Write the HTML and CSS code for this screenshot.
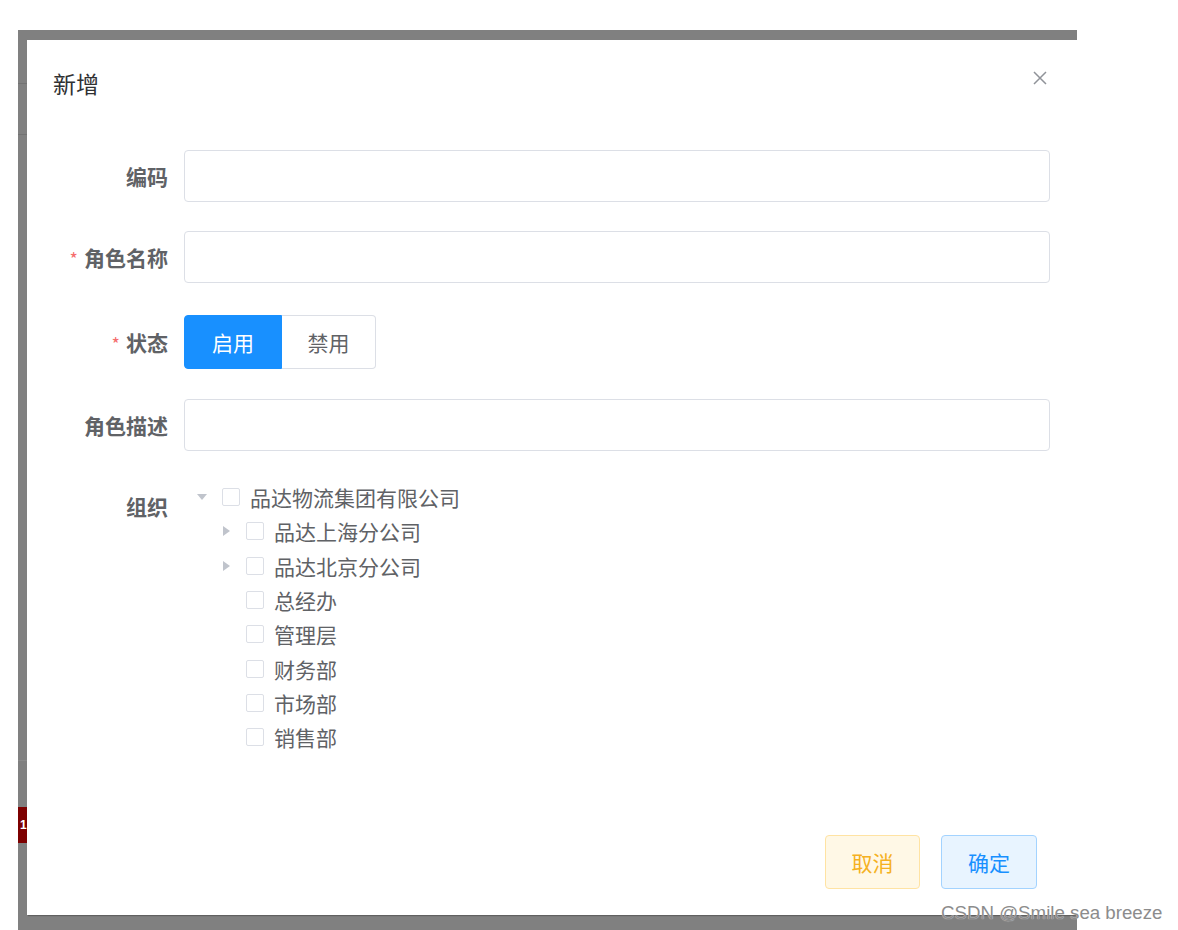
FILE: index.html
```html
<!DOCTYPE html>
<html lang="zh-CN">
<head>
<meta charset="utf-8">
<title>新增</title>
<link rel="stylesheet" href="styles.css">
</head>
<body>
<div class="page">
  <div class="mask">
    <div class="peek">
      <div class="peek-line l1"></div>
      <div class="peek-line l2"></div>
      <div class="peek-line l3"></div>
      <div class="peek-tag"><span>1</span></div>
    </div>
    <div class="dialog">
      <div class="dialog-header">
        <span class="dialog-title">新增</span>
        <svg class="dialog-close" width="14" height="14" viewBox="0 0 14 14"><path d="M1 1 L13 13 M13 1 L1 13" stroke="#909399" stroke-width="1.5" fill="none"/></svg>
      </div>
      <div class="dialog-body">
        <div class="form-item">
          <label class="form-label">编码</label>
          <div class="form-content"><div class="input"></div></div>
        </div>
        <div class="form-item gap-a">
          <label class="form-label"><span class="req">*</span>角色名称</label>
          <div class="form-content"><div class="input"></div></div>
        </div>
        <div class="form-item gap-b">
          <label class="form-label status-label"><span class="req">*</span>状态</label>
          <div class="form-content">
            <div class="radio-group">
              <span class="radio-btn active">启用</span>
              <span class="radio-btn">禁用</span>
            </div>
          </div>
        </div>
        <div class="form-item gap-c">
          <label class="form-label">角色描述</label>
          <div class="form-content"><div class="input"></div></div>
        </div>
        <div class="form-item last">
          <label class="form-label">组织</label>
          <div class="form-content">
            <div class="tree">
              <div class="tree-node lv1"><span class="caret down"></span><span class="checkbox"></span><span class="node-label">品达物流集团有限公司</span></div>
              <div class="tree-node lv2"><span class="caret right"></span><span class="checkbox"></span><span class="node-label">品达上海分公司</span></div>
              <div class="tree-node lv2"><span class="caret right"></span><span class="checkbox"></span><span class="node-label">品达北京分公司</span></div>
              <div class="tree-node lv2"><span class="caret"></span><span class="checkbox"></span><span class="node-label">总经办</span></div>
              <div class="tree-node lv2"><span class="caret"></span><span class="checkbox"></span><span class="node-label">管理层</span></div>
              <div class="tree-node lv2"><span class="caret"></span><span class="checkbox"></span><span class="node-label">财务部</span></div>
              <div class="tree-node lv2"><span class="caret"></span><span class="checkbox"></span><span class="node-label">市场部</span></div>
              <div class="tree-node lv2"><span class="caret"></span><span class="checkbox"></span><span class="node-label">销售部</span></div>
            </div>
          </div>
        </div>
      </div>
      <div class="dialog-footer">
        <span class="btn btn-warning">取消</span>
        <span class="btn btn-primary">确定</span>
      </div>
    </div>
  </div>
</div>
<div class="watermark">CSDN @Smile sea breeze</div>
</body>
</html>
```
FILE: styles.css
```css
html, body {
  margin: 0;
  padding: 0;
  background: #ffffff;
}
body {
  font-family: "Noto Sans CJK SC", "Noto Sans", sans-serif;
  color: #606266;
  width: 1178px;
  height: 930px;
  overflow: hidden;
  position: relative;
}
.page {
  padding: 30px 0 0 18px;
}
.mask {
  width: 1059px;
  height: 900px;
  box-sizing: border-box;
  padding: 10px 0 15px 0;
  background: #808080;
  display: flex;
}
.peek {
  width: 9px;
  flex: none;
  display: flex;
  flex-direction: column;
}
.peek-line {
  height: 1px;
  background: #727272;
}
.peek-line.l1 { margin-top: 43px; }
.peek-line.l2 { margin-top: 50px; }
.peek-line.l3 { margin-top: 625px; background: #8a8a8a; }
.peek-tag {
  margin-top: 46px;
  height: 36px;
  background: #7d0000;
  overflow: hidden;
  color: #ffffff;
  font-family: "Liberation Sans", sans-serif;
  font-weight: bold;
  font-size: 12px;
  line-height: 36px;
  padding-left: 2px;
  box-sizing: border-box;
}
.dialog {
  flex: 1;
  background: #ffffff;
  box-shadow: 0 2px 1px -1px rgba(0,0,0,0.25);
  display: flex;
  flex-direction: column;
}
.dialog-header {
  display: flex;
  justify-content: space-between;
  align-items: flex-start;
  padding: 30px 30px 0 26px;
}
.dialog-title {
  font-size: 23px;
  line-height: 26px;
  color: #303133;
}
.dialog-close {
  margin-top: 1px;
}
.dialog-body {
  padding: 54px 27px 0 0;
}
.form-item {
  display: grid;
  grid-template-columns: 157px 1fr;
  margin-bottom: 29px;
}
.form-item.gap-a { margin-bottom: 31px; }
.form-item.gap-b { margin-bottom: 29px; }
.form-item.last { margin-bottom: 0; }
.form-label {
  text-align: right;
  padding-right: 16px;
  font-size: 21px;
  font-weight: 700;
  line-height: 52px;
  color: #606266;
}
.status-label { line-height: 54px; }
.req {
  color: #f56c6c;
  font-weight: 400;
  font-size: 18px;
  margin-right: 6px;
}
.input {
  height: 52px;
  box-sizing: border-box;
  border: 1px solid #dcdfe6;
  border-radius: 4px;
  background: #fff;
}
.radio-group {
  display: flex;
  height: 54px;
}
.radio-btn {
  box-sizing: border-box;
  height: 54px;
  line-height: 52px;
  text-align: center;
  font-size: 21px;
  color: #606266;
  border: 1px solid #dcdfe6;
  background: #fff;
}
.radio-btn.active {
  width: 98px;
  background: #1890ff;
  border-color: #1890ff;
  color: #ffffff;
  border-radius: 4px 0 0 4px;
}
.radio-btn:last-child {
  width: 94px;
  border-left: 0;
  border-radius: 0 4px 4px 0;
}
.tree {
  display: flex;
  flex-direction: column;
}
.tree-node {
  display: flex;
  align-items: center;
  height: 34.3px;
}
.tree-node.lv2 { padding-left: 24px; }
.caret {
  width: 10px;
  height: 10px;
  margin: 0 15px 0 13px;
  box-sizing: border-box;
  flex: none;
}
.caret.down {
  height: 6px;
  border-left: 5px solid transparent;
  border-right: 5px solid transparent;
  border-top: 6px solid #c0c4cc;
}
.caret.right {
  width: 7px;
  margin: 0 16px 0 15px;
  border-top: 5px solid transparent;
  border-bottom: 5px solid transparent;
  border-left: 7px solid #c0c4cc;
}
.checkbox {
  width: 18px;
  height: 18px;
  box-sizing: border-box;
  border: 1px solid #dcdfe6;
  border-radius: 2px;
  background: #fff;
  flex: none;
}
.node-label {
  margin-left: 10px;
  font-size: 21px;
  color: #606266;
  line-height: 34px;
}
.dialog-footer {
  display: flex;
  justify-content: flex-end;
  gap: 21px;
  padding: 81px 40px 0 0;
}
.btn {
  box-sizing: border-box;
  height: 54px;
  line-height: 52px;
  text-align: center;
  font-size: 21px;
  border-radius: 4px;
  border: 1px solid;
}
.btn-warning {
  width: 95px;
  background: #fff8e6;
  border-color: #ffe3a3;
  color: #f5b121;
}
.btn-primary {
  width: 96px;
  background: #e8f4ff;
  border-color: #a3d3ff;
  color: #1890ff;
}
.watermark {
  position: absolute;
  left: 941px;
  top: 901px;
  font-family: "Liberation Sans", Arial, sans-serif;
  font-size: 18.7px;
  line-height: 24px;
  color: #8c8c8c;
  text-shadow: 0 0 1px rgba(255,255,255,0.9);
  white-space: nowrap;
}
```
